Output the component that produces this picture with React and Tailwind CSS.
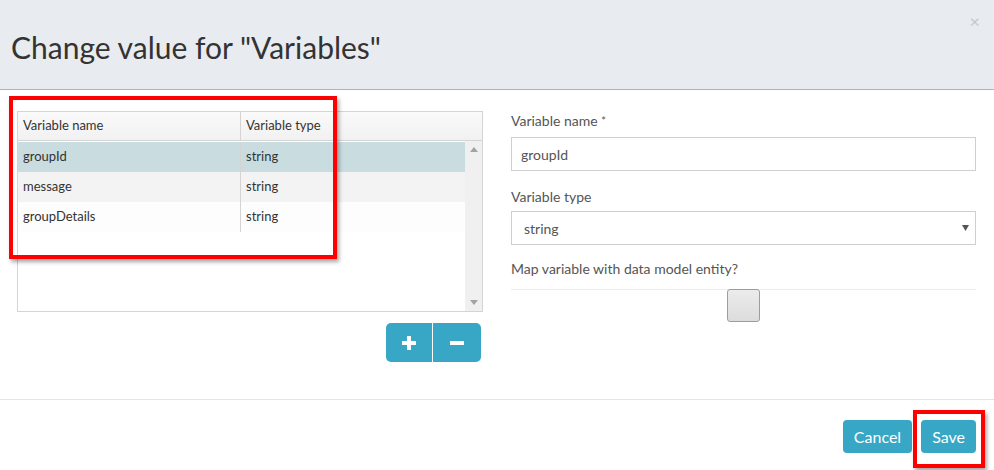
import { useState } from 'react';

const rows = [
  { name: 'groupId', type: 'string' },
  { name: 'message', type: 'string' },
  { name: 'groupDetails', type: 'string' },
];

const rowBg = ['bg-[#c9dde1]', 'bg-[#f3f3f3]', 'bg-[#fdfdfd]'];

export default function App() {
  const [selected] = useState(0);

  return (
    <div
      className="relative w-[994px] h-[470px] bg-white text-[#333] overflow-hidden"
      style={{ fontFamily: 'Lato, "Open Sans", sans-serif' }}
    >
      {/* header */}
      <div className="relative h-[90px] bg-[#e8ecf0] border-b border-[#aab3c0] pl-[11px] pt-[27px]">
        <h1 className="text-[30px] leading-[40px] text-[#333]">Change value for "Variables"</h1>
        <button className="absolute right-[14px] top-[12px] text-[#c4c8cc] text-[18px] leading-none">×</button>
      </div>

      {/* body */}
      <div className="flex h-[309px] pt-[21px]">
        <div className="pl-[17px] w-[483px] shrink-0">
          <div className="border border-[#d4d4d4] w-[466px] h-[201px] flex flex-col">
            <div className="flex h-[29px] border-b border-[#d4d4d4] bg-gradient-to-b from-[#fafafa] to-[#f1f1f1] text-[13px] text-[#333]">
              <div className="w-[223px] border-r border-[#d4d4d4] pl-[5px] flex items-center">Variable name</div>
              <div className="flex-1 pl-[5px] flex items-center">Variable type</div>
            </div>
            <div className="flex flex-1">
              <div className="flex-1 pt-[1px]">
                {rows.map((r, i) => (
                  <div key={r.name} className={`flex h-[30px] text-[13px] ${i === selected ? rowBg[0] : rowBg[i]}`}>
                    <div className="w-[223px] border-r border-[#d4d4d4] pl-[5px] flex items-center">{r.name}</div>
                    <div className="flex-1 pl-[5px] flex items-center">{r.type}</div>
                  </div>
                ))}
              </div>
              <div className="w-[17px] bg-[#f0f0f0] flex flex-col justify-between items-center py-[6px]">
                <svg width="8" height="5" viewBox="0 0 8 5"><path d="M0 5 L4 0 L8 5 Z" fill="#a3a3a3" /></svg>
                <svg width="8" height="5" viewBox="0 0 8 5"><path d="M0 0 L4 5 L8 0 Z" fill="#a3a3a3" /></svg>
              </div>
            </div>
          </div>
          <div className="flex justify-end pr-[2px] mt-[11px]">
            <div className="flex h-[39px] w-[95px] rounded-[5px] overflow-hidden bg-[#37a7c5]">
              <button className="w-[47px] border-r border-white flex items-center justify-center">
                <svg width="14" height="14" viewBox="0 0 14 14"><path d="M5 0h4v5h5v4H9v5H5V9H0V5h5z" fill="#fff" /></svg>
              </button>
              <button className="flex-1 flex items-center justify-center">
                <svg width="14" height="4" viewBox="0 0 14 4"><rect width="14" height="4" fill="#fff" /></svg>
              </button>
            </div>
          </div>
        </div>

        <div className="ml-[28px] w-[465px] text-[14px] text-[#555]">
          <div className="h-[20px] leading-[20px]">Variable name <span className="text-[11px] align-top">*</span></div>
          <div className="mt-[6px] h-[34px] border border-[#cfcfcf] flex items-center pl-[9px] text-[#555]">groupId</div>
          <div className="mt-[16px] leading-[20px]">Variable type</div>
          <div className="mt-[4px] h-[34px] border border-[#cfcfcf] flex items-center justify-between pl-[12px] pr-[6px] text-[#555]">
            <span>string</span>
            <svg width="7" height="6" viewBox="0 0 7 6"><path d="M0 0 L3.5 6 L7 0 Z" fill="#555" /></svg>
          </div>
          <div className="mt-[14px] leading-[20px]">Map variable with data model entity?</div>
          <div className="mt-[10px] border-t border-[#ececec] flex justify-center">
            <div className="w-[33px] h-[33px] -mt-px rounded-[3px] border border-[#9d9d9d] bg-gradient-to-b from-[#ececec] to-[#dcdcdc]" />
          </div>
        </div>
      </div>

      {/* footer */}
      <div className="border-t border-[#e5e5e5] h-[71px] flex justify-end items-start pt-[20px] pr-[18px] gap-[9px]">
        <button className="h-[33px] px-[11px] rounded-[4px] bg-[#37a7c5] text-white text-[16px]">Cancel</button>
        <button className="h-[33px] px-[11px] rounded-[4px] bg-[#37a7c5] text-white text-[16px]">Save</button>
      </div>

      {/* annotations */}
      <div className="absolute left-[9px] top-[96px] w-[328px] h-[163px] border-[4px] border-[#ff0000] shadow-[2px_3px_4px_rgba(0,0,0,0.35)] pointer-events-none" />
      <div className="absolute left-[913px] top-[410px] w-[72px] h-[58px] border-[4px] border-[#ff0000] shadow-[2px_3px_4px_rgba(0,0,0,0.35)] pointer-events-none" />
    </div>
  );
}
